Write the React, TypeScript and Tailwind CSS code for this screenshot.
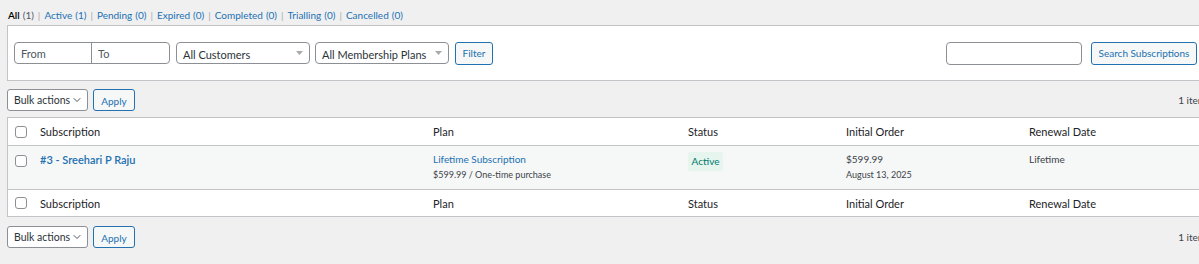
import { ChevronDown } from "lucide-react";

const statusLinks = [
  { label: "All", count: 1, current: true },
  { label: "Active", count: 1 },
  { label: "Pending", count: 0 },
  { label: "Expired", count: 0 },
  { label: "Completed", count: 0 },
  { label: "Trialling", count: 0 },
  { label: "Cancelled", count: 0 },
];

const Checkbox = () => (
  <span className="block size-[12px] rounded-[3px] border border-[#8c8f94] bg-white" />
);

const Caret = () => (
  <svg width="7" height="4" viewBox="0 0 7 4" className="shrink-0">
    <path d="M0 0h7L3.5 4z" fill="#a7aaad" />
  </svg>
);

const BulkActions = () => (
  <div className="flex items-center gap-[5px] whitespace-nowrap">
    <div className="flex h-[22px] w-[81px] items-center justify-between rounded-[3px] border border-[#8c8f94] bg-white pl-[6px] pr-[4px] text-[10.5px] text-[#2c3338]">
      <span>Bulk actions</span>
      <ChevronDown size={12} strokeWidth={2} className="text-[#50575e]" />
    </div>
    <button className="h-[22px] w-[42px] rounded-[3px] border border-[#2271b1] bg-[#f6f7f7] pt-[2px] text-[10px] text-[#2271b1]">
      Apply
    </button>
  </div>
);

const HeaderRow = ({ top }: { top?: boolean }) => (
  <div
    className={
      "grid grid-cols-[32px_393px_255px_158px_183px_1fr] items-center text-[#1d2327] " +
      (top ? "h-[28px] border-b border-[#c3c4c7]" : "h-[26px]")
    }
  >
    <div className="pl-[7px]">
      <Checkbox />
    </div>
    <div>Subscription</div>
    <div>Plan</div>
    <div>Status</div>
    <div>Initial Order</div>
    <div>Renewal Date</div>
  </div>
);

export default function App() {
  return (
    <div
      className="h-[264px] w-[1199px] overflow-hidden bg-[#f0f0f1] text-[11px] leading-[15px] text-[#3c434a]"
      style={{ fontFamily: "Lato, 'Noto Sans', sans-serif" }}
    >
      {/* status filters */}
      <div className="flex h-[25px] items-center whitespace-nowrap pl-[8px] pt-[5px] text-[10px]">
        {statusLinks.map((s, i) => (
          <span key={s.label} className="flex items-center">
            {i > 0 && <span className="px-[4px] text-[#a7aaad]">|</span>}
            <span className={s.current ? "font-semibold text-black" : "text-[#2271b1]"}>{s.label}</span>
            <span className={s.current ? "ml-[3px] text-[#50575e]" : "ml-[3px] text-[#2271b1]"}>
              ({s.count})
            </span>
          </span>
        ))}
      </div>

      {/* filter panel */}
      <div className="ml-[7px] flex h-[56px] w-[1210px] items-center justify-between border border-[#c3c4c7] bg-white pl-[6px] pr-[19px]">
        <div className="flex items-center whitespace-nowrap">
          <div className="flex h-[22px] rounded-[4px] border border-[#8c8f94] text-[#50575e]">
            <div className="flex w-[77px] items-center border-r border-[#8c8f94] pl-[6px]">From</div>
            <div className="flex w-[77px] items-center pl-[6px]">To</div>
          </div>
          <div className="ml-[6px] flex h-[22px] w-[134px] items-center justify-between rounded-[4px] border border-[#8c8f94] pl-[6px] pr-[6px] text-[#2c3338]">
            <span className="pt-[2px]">All Customers</span>
            <Caret />
          </div>
          <div className="ml-[5px] flex h-[22px] w-[134px] items-center justify-between rounded-[4px] border border-[#8c8f94] pl-[6px] pr-[6px] text-[#2c3338]">
            <span className="pt-[2px]">All Membership Plans</span>
            <Caret />
          </div>
          <button className="ml-[6px] h-[23px] w-[38px] rounded-[3px] border border-[#2271b1] bg-[#f6f7f7] text-[10px] text-[#2271b1]">
            Filter
          </button>
        </div>
        <div className="flex items-center whitespace-nowrap">
          <div className="h-[23px] w-[136px] rounded-[4px] border border-[#8c8f94] bg-white" />
          <button className="ml-[9px] h-[23px] w-[106px] rounded-[3px] border border-[#2271b1] bg-[#f6f7f7] text-[10px] text-[#2271b1]">
            Search Subscriptions
          </button>
        </div>
      </div>

      {/* top tablenav */}
      <div className="mt-[8px] flex w-[1220px] items-center justify-between pl-[7px] pr-[14px]">
        <BulkActions />
        <span className="text-[10px] text-[#3c434a]">1 item</span>
      </div>

      {/* table */}
      <div className="ml-[7px] mt-[6px] w-[1210px] border border-[#c3c4c7] bg-white">
        <HeaderRow top />
        <div className="grid h-[44px] grid-cols-[32px_393px_255px_158px_183px_1fr] border-b border-[#c3c4c7] bg-[#f6f7f7] pt-[6px]">
          <div className="pl-[7px] pt-[3px]">
            <Checkbox />
          </div>
          <div className="font-semibold text-[#2271b1]">#3 - Sreehari P Raju</div>
          <div className="flex flex-col text-[10px] leading-[15px]">
            <span className="text-[#2271b1]">Lifetime Subscription</span>
            <span className="text-[9px] text-[#3c434a]">$599.99 / One-time purchase</span>
          </div>
          <div>
            <span className="inline-flex h-[19px] w-[35px] items-center justify-center rounded-[3px] bg-[#e6f5ee] text-[10px] text-[#00796b]">
              Active
            </span>
          </div>
          <div className="flex flex-col leading-[15px]">
            <span className="text-[10px] text-[#3c434a]">$599.99</span>
            <span className="text-[9px]">August 13, 2025</span>
          </div>
          <div className="text-[10px]">Lifetime</div>
        </div>
        <HeaderRow />
      </div>

      {/* bottom tablenav */}
      <div className="mt-[9px] flex w-[1220px] items-center justify-between pl-[7px] pr-[14px]">
        <BulkActions />
        <span className="text-[10px] text-[#3c434a]">1 item</span>
      </div>
    </div>
  );
}
